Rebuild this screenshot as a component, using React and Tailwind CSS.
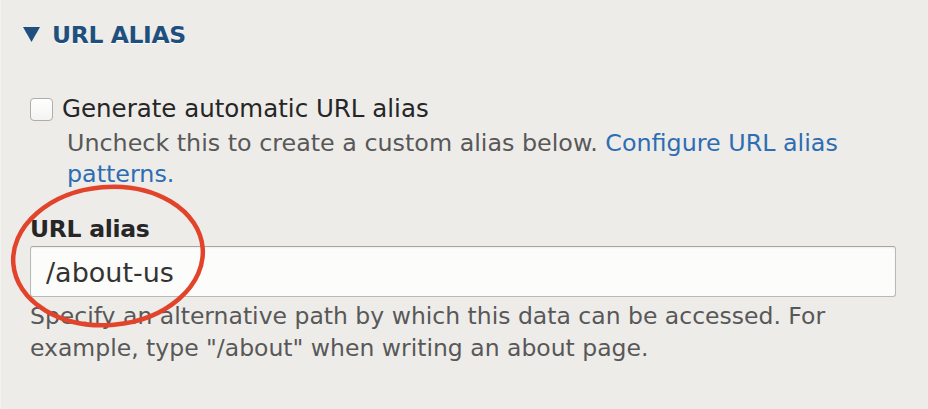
import React, { useState } from 'react';

const font = { fontFamily: '"DejaVu Sans", "Liberation Sans", sans-serif' };

export default function App() {
  const [auto, setAuto] = useState(false);
  const [alias, setAlias] = useState('/about-us');

  return (
    <div className="relative w-[928px] h-[409px] overflow-hidden bg-[#edece9] border-l border-[#f4f3f0]" style={font}>
      {/* details summary */}
      <div className="pt-[20px] pl-[22px] flex items-start gap-[12px]">
        <svg width="17" height="15" viewBox="0 0 17 15" className="mt-[7px] shrink-0">
          <path d="M0 0 H17 L8.5 15 Z" fill="#1f4f7d" />
        </svg>
        <span className="text-[23.5px] leading-[30px] font-bold tracking-[-0.4px] text-[#1f4f7d] [text-shadow:0_1px_0_#fff]">
          URL ALIAS
        </span>
      </div>

      <div className="pl-[29px] pr-[32px]">
        {/* checkbox */}
        <label className="mt-[43px] flex items-start gap-[9px] cursor-pointer">
          <input
            type="checkbox"
            checked={auto}
            onChange={(e) => setAuto(e.target.checked)}
            className="appearance-none mt-[5px] w-[23px] h-[23px] shrink-0 rounded-[4px] border border-[#aeaeac] bg-gradient-to-b from-white to-[#f3f3f1]"
          />
          <span className="text-[24.5px] leading-[32px] text-[#262626]">Generate automatic URL alias</span>
        </label>
        <div className="mt-[3px] ml-[37px] text-[23.8px] leading-[31px] text-[#585858]">
          Uncheck this to create a custom alias below.{' '}
          <a href="#" className="text-[#2e6db3]">Configure URL alias patterns.</a>
        </div>

        {/* url alias field */}
        <div className="mt-[24px] text-[23.5px] leading-[30px] font-bold text-[#262626] tracking-[-0.3px]">URL alias</div>
        <input
          type="text"
          value={alias}
          onChange={(e) => setAlias(e.target.value)}
          className="mt-[2px] block w-full h-[51px] px-[15px] pt-[2px] rounded-[3px] border border-[#b9b9b7] border-t-[#a6a6a4] bg-[#fcfcfb] text-[27px] text-[#333] outline-none shadow-[inset_0_1px_2px_rgba(0,0,0,0.06)]"
          style={font}
        />
        <div className="mt-[4px] text-[23.5px] leading-[31.5px] text-[#585858]">
          Specify an alternative path by which this data can be accessed. For example, type "/about" when writing an about page.
        </div>
      </div>

      {/* red annotation circle */}
      <svg className="absolute left-0 top-0 pointer-events-none" width="928" height="409">
        <ellipse cx="107" cy="256" rx="95" ry="69" fill="none" stroke="#e2442b" strokeWidth="4.5" transform="rotate(-5 107 256)" />
      </svg>
    </div>
  );
}
